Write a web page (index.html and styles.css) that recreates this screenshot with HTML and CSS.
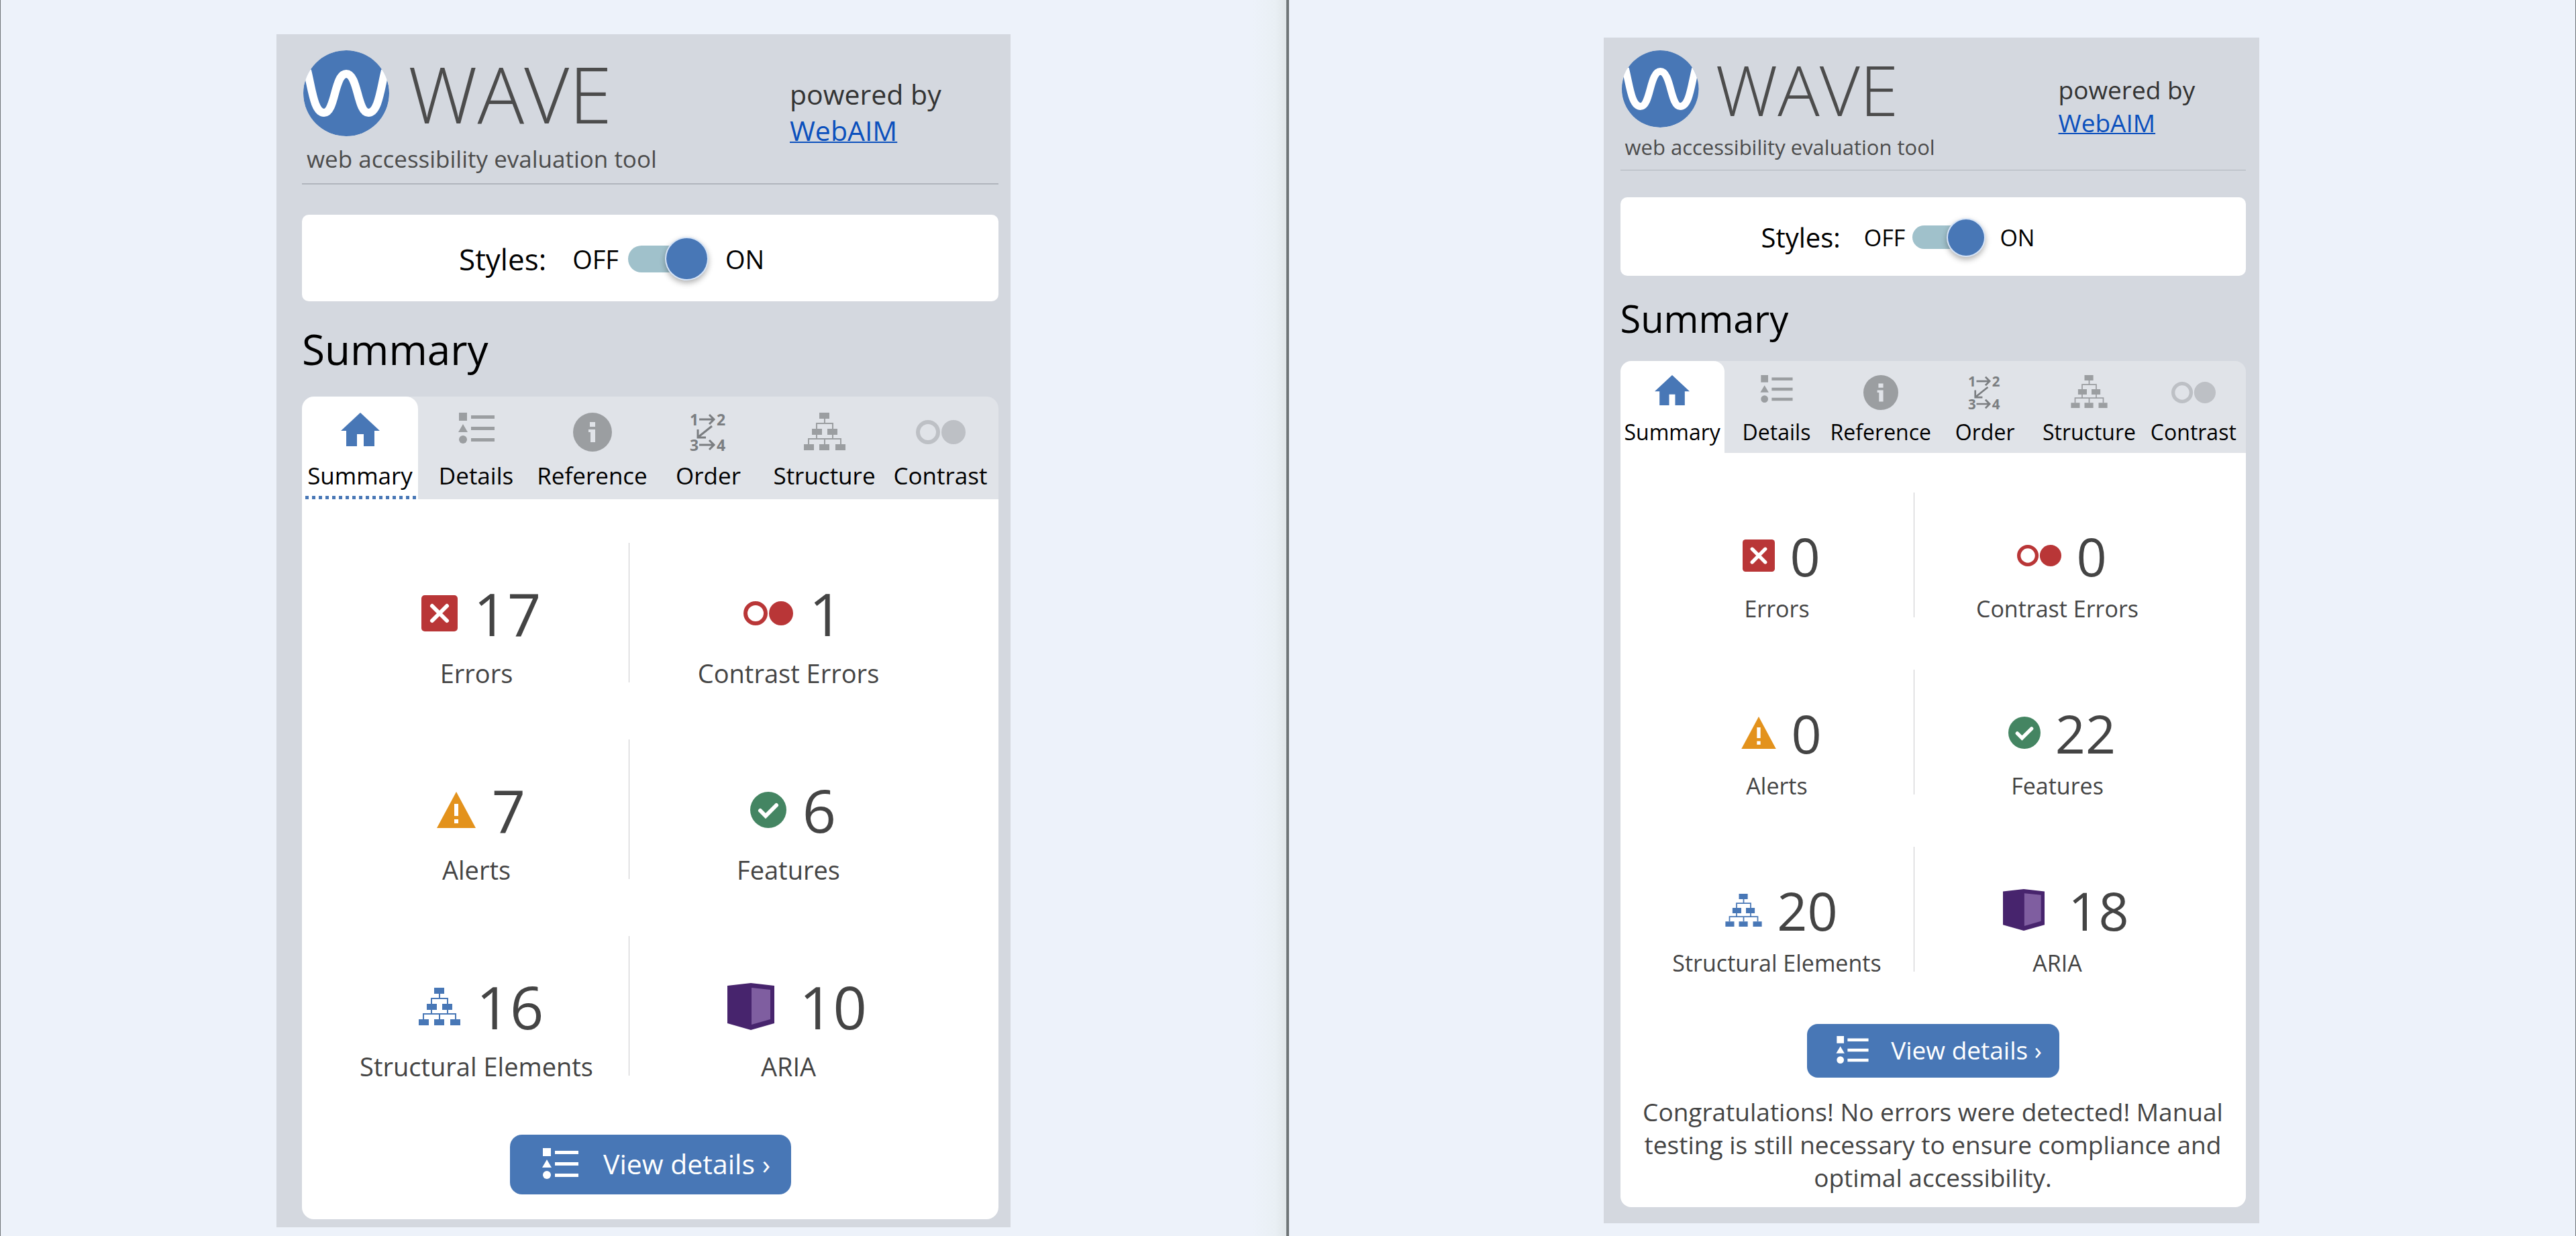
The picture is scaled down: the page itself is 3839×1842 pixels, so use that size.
FILE: index.html
```
<!DOCTYPE html>
<html lang="en">
<head>
<meta charset="utf-8">
<title>WAVE report comparison</title>
<link rel="stylesheet" href="styles.css">
</head>
<body>
<svg class="sprite" aria-hidden="true">
  <symbol id="i-logo" viewBox="0 0 128 128"><circle cx="64" cy="64" r="64" fill="#4877b6"/><path d="M6 30C13 58 16 93 31 93C48 93 46 35 64 35C82 35 80 93 97 93C112 93 115 58 122 30" fill="none" stroke="#fff" stroke-width="12"/></symbol>
  <symbol id="i-home" viewBox="0 0 58 50"><path d="M29 0L58 27H50V50H34V32H24V50H8V27H0Z" fill="currentColor"/></symbol>
  <symbol id="i-list" viewBox="0 0 54 46"><path d="M1 0H13V12H1ZM19 4H54V9H19ZM7 17L14 29H0ZM19 21H54V26H19ZM19 38H54V43H19Z" fill="currentColor"/><circle cx="7" cy="40" r="6" fill="currentColor"/></symbol>
  <symbol id="i-info" viewBox="0 0 58 58"><circle cx="29" cy="29" r="29" fill="currentColor"/><path d="M25 14H33V21H25ZM23 25H33V44H26V29H23Z" fill="#e0e3e8"/></symbol>
  <symbol id="i-order" viewBox="0 0 56 58"><g fill="none" stroke="currentColor" stroke-width="3"><path d="M14 10H36M29 3L36 10L29 17M14 48H36M29 41L36 48L29 55M33 20L13 36M12 25V37H24"/></g><g fill="currentColor" font-family="Open Sans" font-size="23" font-weight="700"><text x="0" y="19">1</text><text x="40" y="19">2</text><text x="0" y="57">3</text><text x="40" y="57">4</text></g></symbol>
  <symbol id="i-tree" viewBox="0 0 62 56"><path d="M23 0H38V9H23ZM12 24H27V33H12ZM35 24H50V33H35ZM0 47H15V56H0ZM23 47H38V56H23ZM47 47H62V56H47Z" fill="currentColor"/><path d="M31 9V16M19 24V16H43V24M19 32V39M43 32V39M7 47V39H55V47M31 39V47" fill="none" stroke="currentColor" stroke-width="2"/></symbol>
  <symbol id="i-contrast" viewBox="0 0 74 36"><circle cx="18" cy="18" r="15" fill="none" stroke="currentColor" stroke-width="6"/><circle cx="56" cy="18" r="18" fill="currentColor"/></symbol>
  <symbol id="i-error" viewBox="0 0 54 54"><rect width="54" height="54" rx="5" fill="#b93637"/><path d="M16 16L38 38M38 16L16 38" stroke="#fff" stroke-width="6" stroke-linecap="round"/></symbol>
  <symbol id="i-alert" viewBox="0 0 58 54"><path d="M29 0L58 54H0Z" fill="#e3921c"/><path d="M26 18H32V36H26ZM26 41H32V47H26Z" fill="#fff"/></symbol>
  <symbol id="i-check" viewBox="0 0 54 54"><circle cx="27" cy="27" r="27" fill="#448562"/><path d="M15 28L23 36L39 20" fill="none" stroke="#fff" stroke-width="6" stroke-linecap="round"/></symbol>
  <symbol id="i-aria" viewBox="0 0 70 70"><path d="M0 4L35 0L70 4V60L35 70L0 60Z" fill="#47246d"/><path d="M36 7L64 10V54L36 62Z" fill="#7f5ea0"/></symbol>
</svg>

<main class="compare">
  <section class="side before" aria-label="Before">
    <div class="card">
      <header class="brand">
        <div class="brand-name">
          <div class="logo"><svg class="logo-mark"><use href="#i-logo"/></svg><span class="logo-text">WAVE</span></div>
          <p class="tagline">web accessibility evaluation tool</p>
        </div>
        <p class="powered">powered by<br><a href="#webaim">WebAIM</a></p>
      </header>
      <div class="styles-box">
        <label class="styles-label" for="styles-a">Styles:</label>
        <span class="switch-word">OFF</span>
        <input class="switch" type="checkbox" id="styles-a" checked>
        <span class="switch-word">ON</span>
      </div>
      <h1 class="title">Summary</h1>
      <div class="tabs" role="tablist">
        <button class="tab active focused" role="tab" aria-selected="true"><svg class="icon home"><use href="#i-home"/></svg><span class="tab-name">Summary</span></button>
        <button class="tab" role="tab"><svg class="icon list"><use href="#i-list"/></svg><span class="tab-name">Details</span></button>
        <button class="tab" role="tab"><svg class="icon info"><use href="#i-info"/></svg><span class="tab-name">Reference</span></button>
        <button class="tab dark" role="tab"><svg class="icon order"><use href="#i-order"/></svg><span class="tab-name">Order</span></button>
        <button class="tab" role="tab"><svg class="icon tree"><use href="#i-tree"/></svg><span class="tab-name">Structure</span></button>
        <button class="tab pale" role="tab"><svg class="icon contrast"><use href="#i-contrast"/></svg><span class="tab-name">Contrast</span></button>
      </div>
      <div class="panel" role="tabpanel">
        <ul class="stats">
          <li class="stat"><div class="figure"><svg class="icon square"><use href="#i-error"/></svg><span class="count">17</span></div><span class="stat-name">Errors</span></li>
          <li class="stat"><div class="figure red"><svg class="icon contrast"><use href="#i-contrast"/></svg><span class="count">1</span></div><span class="stat-name">Contrast Errors</span></li>
          <li class="stat"><div class="figure"><svg class="icon alert"><use href="#i-alert"/></svg><span class="count">7</span></div><span class="stat-name">Alerts</span></li>
          <li class="stat"><div class="figure"><svg class="icon square"><use href="#i-check"/></svg><span class="count">6</span></div><span class="stat-name">Features</span></li>
          <li class="stat"><div class="figure blue"><svg class="icon tree"><use href="#i-tree"/></svg><span class="count">16</span></div><span class="stat-name">Structural Elements</span></li>
          <li class="stat"><div class="figure"><svg class="icon aria"><use href="#i-aria"/></svg><span class="count">10</span></div><span class="stat-name">ARIA</span></li>
        </ul>
        <button class="details"><svg class="icon list"><use href="#i-list"/></svg><span>View details ›</span></button>
      </div>
    </div>
  </section>

  <section class="side after" aria-label="After">
    <div class="card">
      <header class="brand">
        <div class="brand-name">
          <div class="logo"><svg class="logo-mark"><use href="#i-logo"/></svg><span class="logo-text">WAVE</span></div>
          <p class="tagline">web accessibility evaluation tool</p>
        </div>
        <p class="powered">powered by<br><a href="#webaim">WebAIM</a></p>
      </header>
      <div class="styles-box">
        <label class="styles-label" for="styles-b">Styles:</label>
        <span class="switch-word">OFF</span>
        <input class="switch" type="checkbox" id="styles-b" checked>
        <span class="switch-word">ON</span>
      </div>
      <h1 class="title">Summary</h1>
      <div class="tabs" role="tablist">
        <button class="tab active" role="tab" aria-selected="true"><svg class="icon home"><use href="#i-home"/></svg><span class="tab-name">Summary</span></button>
        <button class="tab" role="tab"><svg class="icon list"><use href="#i-list"/></svg><span class="tab-name">Details</span></button>
        <button class="tab" role="tab"><svg class="icon info"><use href="#i-info"/></svg><span class="tab-name">Reference</span></button>
        <button class="tab dark" role="tab"><svg class="icon order"><use href="#i-order"/></svg><span class="tab-name">Order</span></button>
        <button class="tab" role="tab"><svg class="icon tree"><use href="#i-tree"/></svg><span class="tab-name">Structure</span></button>
        <button class="tab pale" role="tab"><svg class="icon contrast"><use href="#i-contrast"/></svg><span class="tab-name">Contrast</span></button>
      </div>
      <div class="panel" role="tabpanel">
        <ul class="stats">
          <li class="stat"><div class="figure"><svg class="icon square"><use href="#i-error"/></svg><span class="count">0</span></div><span class="stat-name">Errors</span></li>
          <li class="stat"><div class="figure red"><svg class="icon contrast"><use href="#i-contrast"/></svg><span class="count">0</span></div><span class="stat-name">Contrast Errors</span></li>
          <li class="stat"><div class="figure"><svg class="icon alert"><use href="#i-alert"/></svg><span class="count">0</span></div><span class="stat-name">Alerts</span></li>
          <li class="stat"><div class="figure"><svg class="icon square"><use href="#i-check"/></svg><span class="count">22</span></div><span class="stat-name">Features</span></li>
          <li class="stat"><div class="figure blue"><svg class="icon tree"><use href="#i-tree"/></svg><span class="count">20</span></div><span class="stat-name">Structural Elements</span></li>
          <li class="stat"><div class="figure"><svg class="icon aria"><use href="#i-aria"/></svg><span class="count">18</span></div><span class="stat-name">ARIA</span></li>
        </ul>
        <button class="details"><svg class="icon list"><use href="#i-list"/></svg><span>View details ›</span></button>
        <p class="message">Congratulations! No errors were detected! Manual testing is still necessary to ensure compliance and optimal accessibility.</p>
      </div>
    </div>
  </section>
</main>
</body>
</html>
```
FILE: styles.css
```
* { box-sizing: border-box; }

body {
  margin: 0;
  background: #edf2fa;
  color: #444;
  font-family: "Open Sans", "Noto Sans", sans-serif;
}

p, h1, ul { margin: 0; padding: 0; }
button { border: 0; font: inherit; cursor: pointer; }
.sprite { display: none; }

.compare {
  display: grid;
  grid-template-columns: 1fr 1fr;
  min-height: 100vh;
}

.before {
  --card-w: 1094px;
  --card-pad: 24px 18px 12px 38px;
  --mark: 128px;
  --wave: 116px;
  --wave-gap: 28px;
  --brand-h: 200px;
  --tag: 35px;
  --tag-lh: 67px;
  --text: 41px;
  --text-lh: 54px;
  --powered-top: 38px;
  --powered-w: 311px;
  --rule: 2px;
  --box-gap: 45px;
  --box-h: 129px;
  --styles: 44px;
  --styles-gap: 39px;
  --word: 38px;
  --box-left: 234px;
  --knob: 61px;
  --switch-w: 118px;
  --switch-margin: 0 27px 0 14px;
  --track-h: 40px;
  --title: 62px;
  --title-h: 142px;
  --tab-h: 153px;
  --tab-icon-h: 58px;
  --tab-pad: 24px;
  --tab-text: 35px;
  --tab-bottom: 12px;
  --radius: 18px;
  --panel-top: 65px;
  --stat-cols: 455px 474px;
  --stat-pad: 33px;
  --stat-h: 208px;
  --stat-gap: 85px;
  --fig-top: 50px;
  --fig-h: 110px;
  --fig-gap: 24px;
  --count: 88px;
  --name: 38px;
  --name-gap: 8px;
  --name-lh: 52px;
  --button-top: 88px;
  --button-w: 419px;
  --button-h: 89px;
  --button-gap: 37px;
  --button-text: 41px;
  --panel-bottom: 37px;
  --home: 58px;
  --list: 54px;
  --info: 58px;
  --order: 56px;
  --tree: 62px;
  --contrast: 74px;
  --square: 54px;
  --aria: 70px;
  padding: 51px 0 8px 411px;
  border-left: 1px solid #6f7577;
  border-right: 3px solid #6f7577;
  background: linear-gradient(to left, #dfe5e8, #e9eff4 16px, #edf2fa 50px);
}

.after {
  --card-w: 977px;
  --card-pad: 19px 20px 24px 25px;
  --mark: 115px;
  --wave: 104px;
  --wave-gap: 25px;
  --brand-h: 179px;
  --tag: 31px;
  --tag-lh: 58px;
  --text: 37px;
  --text-lh: 49px;
  --powered-top: 34px;
  --powered-w: 279px;
  --rule: 1px;
  --box-gap: 40px;
  --box-h: 117px;
  --styles: 40px;
  --styles-gap: 35px;
  --word: 34px;
  --box-left: 210px;
  --knob: 54px;
  --switch-w: 107px;
  --switch-margin: 0 23px 0 11px;
  --track-h: 35px;
  --title: 56px;
  --title-h: 127px;
  --tab-h: 137px;
  --tab-icon-h: 52px;
  --tab-pad: 21px;
  --tab-text: 32px;
  --tab-bottom: 8px;
  --radius: 16px;
  --panel-top: 59px;
  --stat-cols: 408px 427px;
  --stat-pad: 30px;
  --stat-h: 186px;
  --stat-gap: 78px;
  --fig-top: 45px;
  --fig-h: 98px;
  --fig-gap: 22px;
  --count: 79px;
  --name: 34px;
  --name-gap: 7px;
  --name-lh: 47px;
  --button-top: 78px;
  --button-w: 376px;
  --button-h: 80px;
  --button-gap: 33px;
  --button-text: 37px;
  --panel-bottom: 20px;
  --home: 52px;
  --list: 49px;
  --info: 52px;
  --order: 50px;
  --tree: 55px;
  --contrast: 66px;
  --square: 48px;
  --aria: 62px;
  padding: 56px 0 8px 469px;
  border-left: 1px solid #6f7577;
  border-right: 1px solid #6f7577;
}

.card {
  width: var(--card-w);
  max-width: 100%;
  padding: var(--card-pad);
  background: #d4d8df;
}

/* Header */
.brand {
  display: flex;
  justify-content: space-between;
  height: var(--brand-h);
  border-bottom: var(--rule) solid #b0b5bd;
}
.logo {
  display: flex;
  align-items: center;
  gap: var(--wave-gap);
  height: var(--mark);
  padding-left: 2px;
}
.logo-mark { width: var(--mark); height: var(--mark); clip-path: circle(50%); }
.logo-text { font-size: var(--wave); font-weight: 300; line-height: 1; color: #4c4c4c; }
.tagline { padding-left: 7px; font-size: var(--tag); line-height: var(--tag-lh); color: #4c4c4c; white-space: nowrap; }
.powered { width: var(--powered-w); padding-top: var(--powered-top); font-size: var(--text); line-height: var(--text-lh); color: #333; }
.powered a { color: #0b50bd; text-decoration-thickness: 2px; }

/* Styles switch */
.styles-box {
  display: flex;
  align-items: center;
  height: var(--box-h);
  margin-top: var(--box-gap);
  padding: 2px 0 0 var(--box-left);
  border-radius: 10px;
  background: #fff;
  color: #000;
}
.styles-label { margin-right: var(--styles-gap); font-size: var(--styles); }
.switch-word { font-size: var(--word); }
.switch {
  appearance: none;
  position: relative;
  width: var(--switch-w);
  height: var(--track-h);
  margin: var(--switch-margin);
  border-radius: var(--track-h);
  background: #a0c1cb;
}
.switch::after {
  content: "";
  position: absolute;
  top: 50%;
  right: 0;
  width: var(--knob);
  height: var(--knob);
  margin-top: calc(var(--knob) / -2);
  border-radius: 50%;
  background: #4877b6;
  box-shadow: 0 0 0 2px #d6e4f7, 0 4px 8px 2px rgba(0, 0, 0, .3);
}

.title { height: var(--title-h); font-size: var(--title); font-weight: 400; line-height: var(--title-h); color: #000; }

/* Tabs */
.tabs {
  display: grid;
  grid-template-columns: repeat(6, 1fr);
  border-radius: var(--radius) var(--radius) 0 0;
  background: #e0e3e8;
}
.tab {
  display: flex;
  flex-direction: column;
  align-items: center;
  height: var(--tab-h);
  padding: var(--tab-pad) 0 0;
  border-radius: var(--radius) var(--radius) 0 0;
  background: none;
  color: #9b9ea1;
}
.tab.dark { color: #7b7e81; }
.tab.pale { color: #bdc0c5; }
.tab.active { background: #fff; color: #4877b6; }
.tab.focused { background: repeating-linear-gradient(to right, #4877b6 0 5px, transparent 5px 10px) 5px 100% / 165px 5px no-repeat #fff; }
.tab-name { margin-top: auto; padding-bottom: var(--tab-bottom); font-size: var(--tab-text); line-height: 46px; color: #000; }
.tab .contrast { height: var(--tab-icon-h); }

.icon { flex: none; display: block; }
.home { width: var(--home); height: 50px; }
.list { width: var(--list); height: 46px; }
.info { width: var(--info); height: var(--info); }
.order { width: var(--order); height: 58px; }
.tree { width: var(--tree); height: 56px; }
.contrast { width: var(--contrast); height: 36px; }
.square { width: var(--square); height: var(--square); }
.alert { width: var(--home); height: var(--square); }
.aria { width: var(--aria); height: var(--aria); margin: 0 13px 0 12px; }
.after .home { height: 45px; }
.after .list { height: 41px; }
.after .order { height: 52px; }
.after .tree { height: 49px; }

/* Summary panel */
.panel {
  display: flex;
  flex-direction: column;
  padding: var(--panel-top) 0 var(--panel-bottom);
  border-radius: 0 0 var(--radius) var(--radius);
  background: #fff;
}
.stats {
  display: grid;
  grid-template-columns: var(--stat-cols);
  grid-auto-rows: var(--stat-h);
  row-gap: var(--stat-gap);
  padding-left: var(--stat-pad);
  list-style: none;
}
.stat { display: flex; flex-direction: column; align-items: center; gap: var(--name-gap); padding-top: var(--fig-top); }
.stat:nth-child(odd) { border-right: 1px solid #c9c9cc; }
.figure { display: flex; flex: none; align-items: center; gap: var(--fig-gap); height: var(--fig-h); padding-left: 14px; }
.count { font-size: var(--count); line-height: 1; }
.stat-name { font-size: var(--name); line-height: var(--name-lh); white-space: nowrap; }
.red .icon { color: #b93637; }
.blue .icon { color: #4877b6; }

.details {
  display: flex;
  align-items: center;
  align-self: center;
  justify-content: center;
  gap: var(--button-gap);
  width: var(--button-w);
  height: var(--button-h);
  margin-top: var(--button-top);
  padding: 0 0 4px 18px;
  border-radius: var(--radius);
  background: #4877b6;
  color: #fff;
  font-size: var(--button-text);
}
.message { padding: 26px 20px 0; font-size: 37px; line-height: 49px; text-align: center; }
```
